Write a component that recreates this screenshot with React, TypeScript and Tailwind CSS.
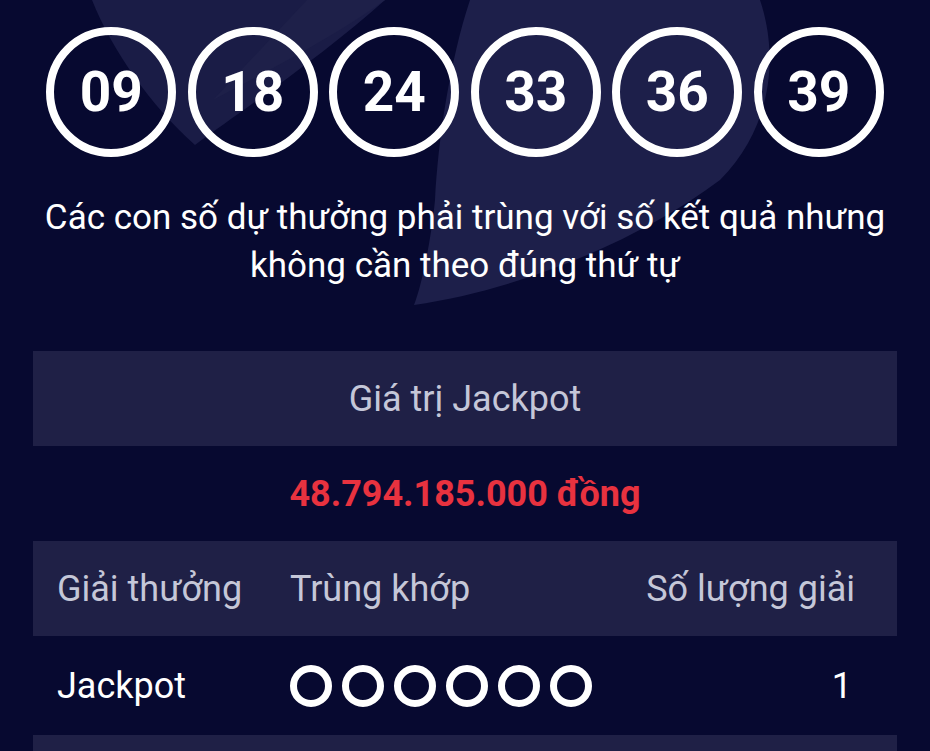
import React from "react";

const balls = ["09", "18", "24", "33", "36", "39"];

function Background() {
  return (
    <svg
      className="absolute inset-0 pointer-events-none"
      width="930"
      height="751"
      viewBox="0 0 930 751"
    >
      <path
        d="M92 0 C112 50 150 105 195 145 C250 105 330 50 385 0 Z"
        fill="#1a1c46"
      />
      <path d="M307 0 L213 100 C250 80 330 40 385 0 Z" fill="#1e2049" />
      <path
        d="M470 0 C450 60 438 140 435 200 C430 250 420 290 414 305 C520 290 640 240 720 180 C770 130 780 60 760 0 Z"
        fill="#1d1f4a"
      />
    </svg>
  );
}

export default function App() {
  return (
    <div
      className="relative w-[930px] h-[751px] overflow-hidden bg-[#070930] text-white"
      style={{ fontFamily: "Roboto, 'Noto Sans', sans-serif" }}
    >
      <Background />
      <div className="relative flex flex-col">
        <div className="flex justify-center gap-[11.5px] pt-[27px]">
          {balls.map((b) => (
            <div
              key={b}
              className="w-[130px] h-[130px] rounded-full border-[8px] border-white flex items-center justify-center text-[55px] font-bold leading-none"
            >
              {b}
            </div>
          ))}
        </div>

        <p className="mt-[37px] text-center text-[35px] leading-[48px] text-white whitespace-nowrap">
          Các con số dự thưởng phải trùng với số kết quả nhưng
          <br />
          không cần theo đúng thứ tự
        </p>

        <div className="mx-[33px] mt-[61px] flex flex-col">
          <div className="h-[95px] bg-[#1f2046] flex items-center justify-center text-[36px] text-[#c5c7d8]">
            Giá trị Jackpot
          </div>
          <div className="h-[95px] flex items-center justify-center text-[36px] font-bold text-[#e8323f]">
            48.794.185.000 đồng
          </div>
          <div className="h-[95px] bg-[#1f2046] flex items-center pl-[24px] pr-[42px] text-[36px] text-[#c5c7d8]">
            <div className="w-[233px]">Giải thưởng</div>
            <div className="flex-1">Trùng khớp</div>
            <div>Số lượng giải</div>
          </div>
          <div className="h-[99px] flex items-center pl-[24px] pr-[45px] text-[36px] text-white">
            <div className="w-[233px]">Jackpot</div>
            <div className="flex-1 flex gap-[10px]">
              {[0, 1, 2, 3, 4, 5].map((i) => (
                <div
                  key={i}
                  className="w-[42px] h-[42px] rounded-full border-[7px] border-white"
                />
              ))}
            </div>
            <div>1</div>
          </div>
          <div className="h-[95px] bg-[#1f2046]" />
        </div>
      </div>
    </div>
  );
}
